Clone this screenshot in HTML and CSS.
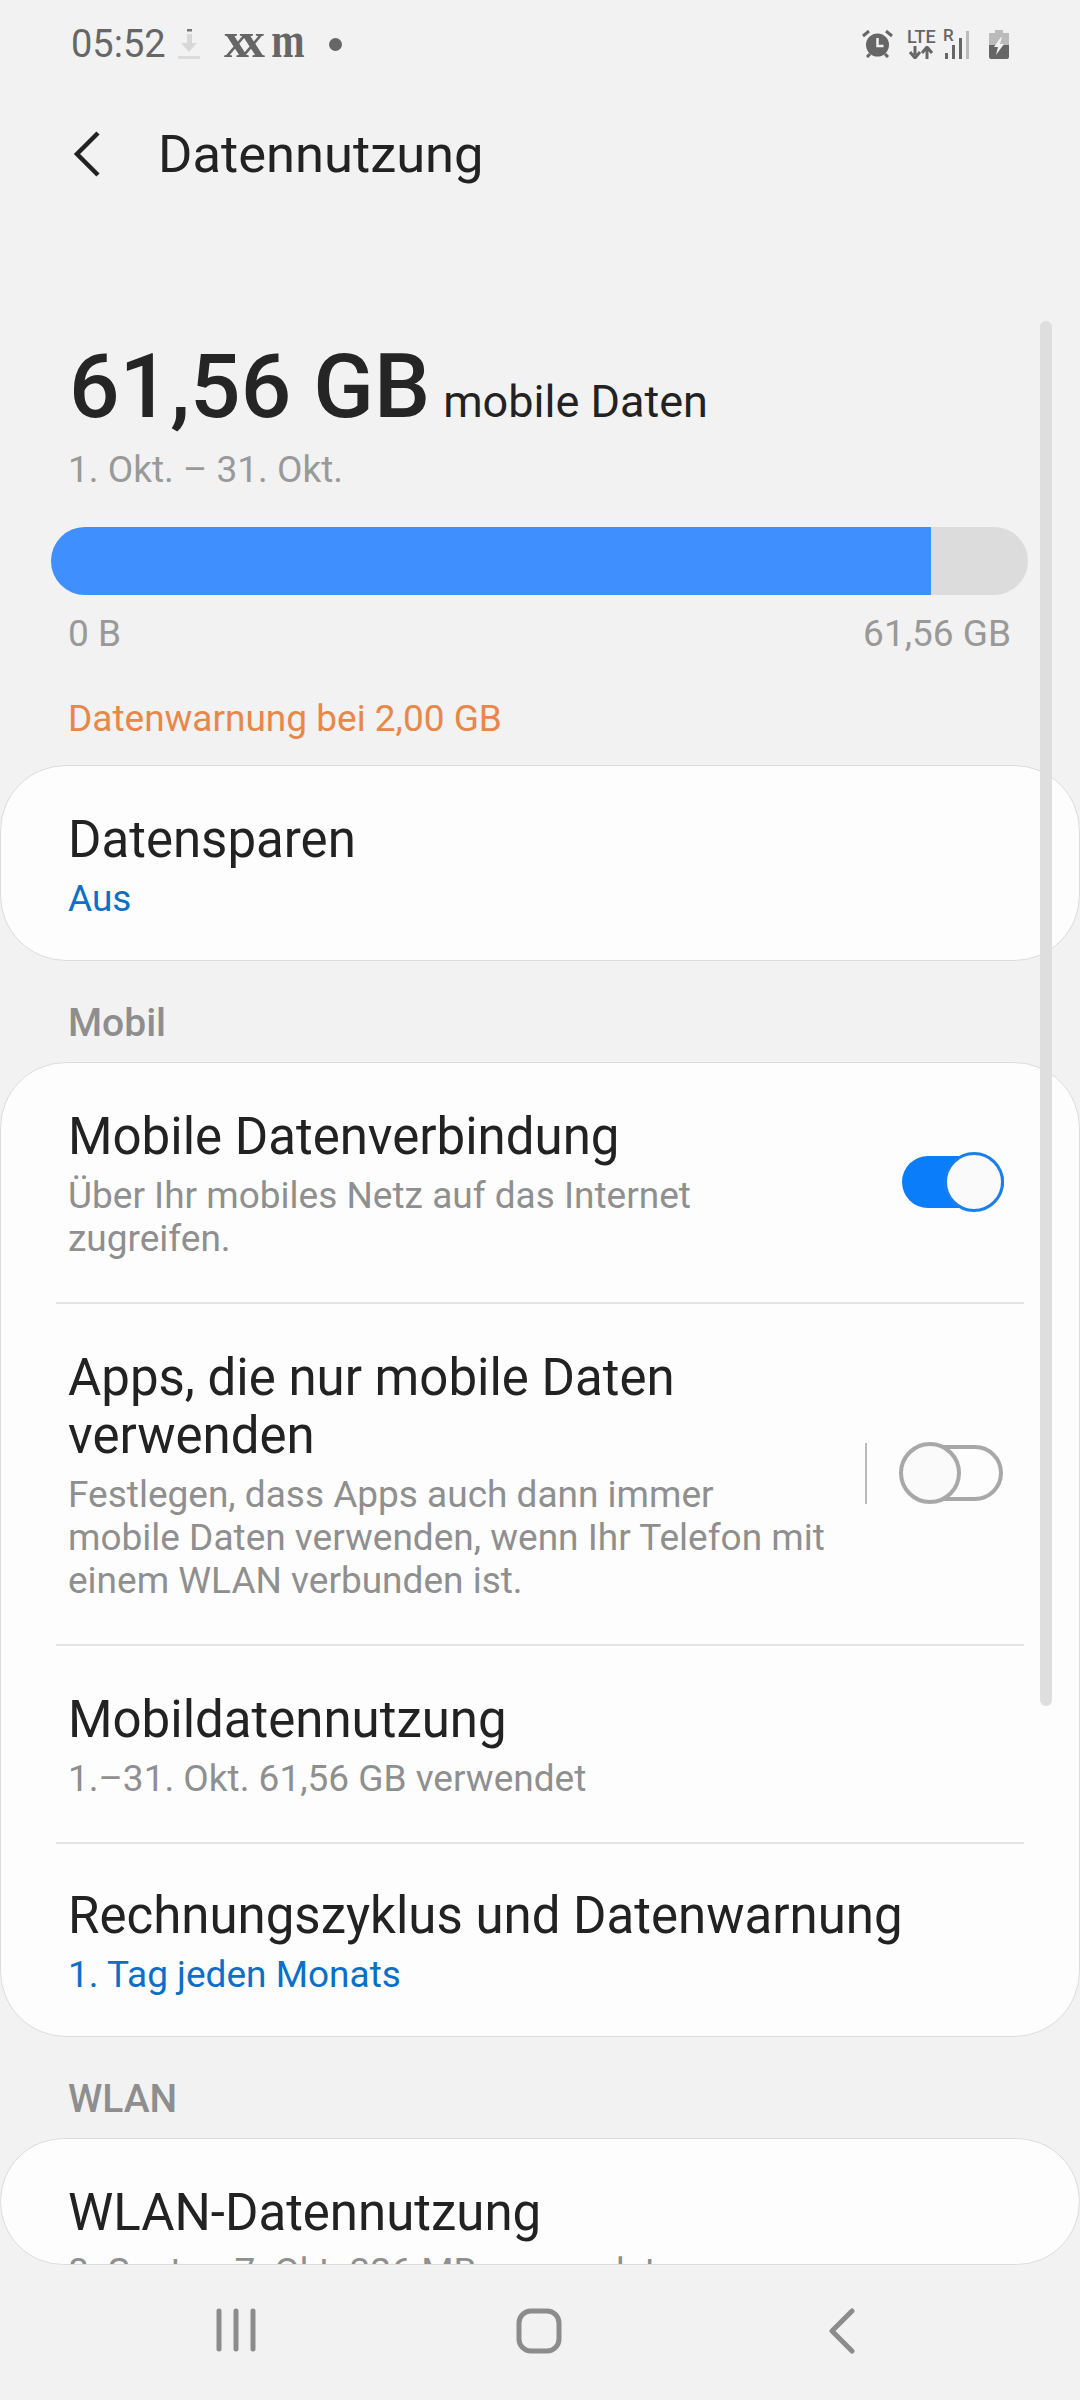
FILE: index.html
```html
<!DOCTYPE html>
<html lang="de">
<head>
  <meta charset="UTF-8" />
  <meta name="viewport" content="width=device-width, initial-scale=1.0"/>
  <title>Datennutzung</title>
  <link rel="stylesheet" href="styles.css">
</head>
<body>
  <div class="screen">
    <!-- Status bar -->
    <div class="status-bar">
      <div class="status-left">
        <span class="clock">05:52</span>
        <svg class="ic-download" width="22" height="30" viewBox="0 0 22 30">
          <rect x="9" y="0" width="5" height="2.5" fill="#777"/>
          <path d="M9 5h5v9h5l-8 9-8-9h6z" fill="#d8d8d8"/>
          <rect x="0" y="27" width="22" height="3" fill="#dcdcdc"/>
        </svg>
        <span class="notif notif-xx">xx</span>
        <span class="notif notif-m">m</span>
        <span class="status-dot"></span>
      </div>
      <div class="status-right">
        <svg class="ic-alarm" width="31" height="28" viewBox="0 0 31 28">
          <circle cx="15.500" cy="15" r="11.500" fill="#666"/>
          <path d="M15.500 8v8h6" fill="none" stroke="#f2f2f2" stroke-width="2.500"/>
          <path d="M1 6l6-5M30 6l-6-5M5 27l3-3M26 27l-3-3" stroke="#666" stroke-width="3" fill="none"/>
        </svg>
        <div class="net">
          <span class="lte">LTE</span>
          <svg width="28" height="13" viewBox="0 0 28 13">
            <path d="M8 0v9M3 6l5 6 5-6" fill="none" stroke="#666" stroke-width="3"/>
            <path d="M20 13V3M15 7l5-6 5 6" fill="none" stroke="#666" stroke-width="3"/>
          </svg>
        </div>
        <div class="signal">
          <span class="roam">R</span>
          <svg width="27" height="28" viewBox="0 0 27 28">
            <rect x="0" y="22" width="3" height="6" fill="#666"/>
            <rect x="7" y="14" width="3" height="14" fill="#666"/>
            <rect x="14" y="7" width="3" height="21" fill="#666"/>
            <rect x="21" y="0" width="3" height="28" fill="#bbb"/>
          </svg>
        </div>
        <svg class="ic-battery" width="20" height="29" viewBox="0 0 20 29">
          <path d="M6 0h8v3h6v13H0V3h6z" fill="#bbb"/>
          <path d="M0 15h20v12a2 2 0 0 1-2 2H2a2 2 0 0 1-2-2z" fill="#666"/>
          <path d="M12 7L5 17h4l-2 8 8-11h-4l2-7z" fill="#f2f2f2"/>
        </svg>
      </div>
    </div>

    <!-- Title -->
    <header class="app-bar">
      <svg class="back" width="28" height="48" viewBox="0 0 28 48">
        <path d="M25 3L4 24l21 21" fill="none" stroke="#222" stroke-width="4.500"/>
      </svg>
      <div class="app-title">Datennutzung</div>
    </header>

    <main class="content">
      <div class="scrollbar"></div>

      <section class="summary">
        <div class="usage"><span class="usage-num">61,56 GB</span> <span class="usage-label">mobile Daten</span></div>
        <div class="period">1. Okt. – 31. Okt.</div>
        <div class="bar"><div class="bar-fill" style="width: 90.1%"></div></div>
        <div class="bar-labels"><span>0 B</span><span>61,56 GB</span></div>
        <div class="warning">Datenwarnung bei 2,00 GB</div>
      </section>

      <div class="card">
        <div class="row">
          <div class="row-text">
            <div class="row-title">Datensparen</div>
            <div class="row-sub link">Aus</div>
          </div>
        </div>
      </div>

      <div class="section-label">Mobil</div>
      <div class="card">
        <div class="row">
          <div class="row-text narrow">
            <div class="row-title">Mobile Datenverbindung</div>
            <div class="row-sub">Über Ihr mobiles Netz auf das Internet zugreifen.</div>
          </div>
          <div class="toggle on"><span class="track"></span><span class="knob"></span></div>
        </div>
        <div class="row">
          <div class="row-text narrow">
            <div class="row-title">Apps, die nur mobile Daten verwenden</div>
            <div class="row-sub">Festlegen, dass Apps auch dann immer mobile Daten verwenden, wenn Ihr Telefon mit einem WLAN verbunden ist.</div>
          </div>
          <div class="v-line"></div>
          <div class="toggle"><span class="track"></span><span class="knob"></span></div>
        </div>
        <div class="row">
          <div class="row-text">
            <div class="row-title">Mobildatennutzung</div>
            <div class="row-sub">1.–31. Okt. 61,56 GB verwendet</div>
          </div>
        </div>
        <div class="row">
          <div class="row-text">
            <div class="row-title">Rechnungszyklus und Datenwarnung</div>
            <div class="row-sub link">1. Tag jeden Monats</div>
          </div>
        </div>
      </div>

      <div class="section-label">WLAN</div>
      <div class="card card-cut">
        <div class="row">
          <div class="row-text">
            <div class="row-title">WLAN-Datennutzung</div>
            <div class="row-sub">8. Sept. – 7. Okt. 326 MB verwendet</div>
          </div>
        </div>
      </div>
    </main>

    <!-- Nav buttons -->
    <nav class="nav-bar">
      <svg width="40" height="44" viewBox="0 0 40 44">
        <path d="M3 3v38M20 3v38M37 3v38" stroke="#8c8c8c" stroke-width="5" stroke-linecap="round" fill="none"/>
      </svg>
      <svg width="46" height="46" viewBox="0 0 46 46">
        <rect x="3" y="3" width="40" height="40" rx="12" fill="none" stroke="#8c8c8c" stroke-width="5"/>
      </svg>
      <svg class="nav-back" width="28" height="46" viewBox="0 0 28 46">
        <path d="M24 3L4 23l20 20" stroke="#8c8c8c" stroke-width="5" stroke-linecap="round" stroke-linejoin="round" fill="none"/>
      </svg>
    </nav>
  </div>
</body>
</html>
```

FILE: styles.css
```css
* {
  box-sizing: border-box;
}
html, body {
  margin: 0;
  height: 100%;
}
body {
  font-family: Roboto, "Noto Sans", sans-serif;
  background-color: #f2f2f2;
  color: #222;
}
.screen {
  width: 1080px;
  height: 2400px;
  display: flex;
  flex-direction: column;
  overflow: hidden;
}

/* status bar */
.status-bar {
  height: 88px;
  flex-shrink: 0;
  padding: 0 71px;
  display: flex;
  justify-content: space-between;
  align-items: center;
}
.status-left, .status-right {
  display: flex;
  align-items: center;
}
.clock {
  width: 87px;
  margin-right: 20px;
  font-size: 38px;
  color: #666;
}
.notif {
  display: inline-block;
  font-family: "Liberation Serif", serif;
  font-weight: bold;
  font-size: 50px;
  color: #666;
  line-height: 30px;
  position: relative;
  top: -4px;
}
.notif-xx {
  margin-left: 24px;
  letter-spacing: -9px;
}
.notif-m {
  margin: 0 20px 0 11px;
  transform: scaleX(.8);
}
.status-dot {
  width: 13px;
  height: 13px;
  border-radius: 50%;
  background-color: #666;
}
.ic-alarm {
  margin-right: 14px;
}
.net {
  width: 28px;
  margin-right: 8px;
  display: flex;
  flex-direction: column;
  gap: 2px;
}
.lte {
  font-size: 18px;
  line-height: 15px;
  font-weight: 500;
  color: #666;
}
.signal {
  width: 27px;
  height: 30px;
  margin-right: 19px;
  position: relative;
}
.roam {
  position: absolute;
  left: 0;
  top: -1px;
  font-size: 17px;
  line-height: 15px;
  font-weight: 500;
  color: #666;
}
.signal svg {
  position: absolute;
  left: 2px;
  top: 2px;
}

/* app bar */
.app-bar {
  height: 132px;
  flex-shrink: 0;
  padding-left: 73px;
  display: flex;
  align-items: center;
  gap: 57px;
}
.app-title {
  font-size: 52.500px;
}

/* scroll area */
.content {
  flex: 1;
  position: relative;
  overflow: hidden;
}
.scrollbar {
  position: absolute;
  top: 101px;
  right: 28px;
  width: 12px;
  height: 1385px;
  border-radius: 6px;
  background-color: #dedede;
  z-index: 5;
}
.summary {
  padding: 115px 52px 0 51px;
}
.usage {
  padding-left: 18px;
  line-height: 104px;
  height: 98px;
}
.usage-num {
  font-size: 89px;
  font-weight: 500;
  color: #252525;
}
.usage-label {
  font-size: 45px;
  margin-left: 9px;
}
.period {
  padding-left: 17px;
  margin-top: 15px;
  font-size: 37px;
  line-height: 43px;
  color: #999;
}
.bar {
  margin-top: 36px;
  height: 68px;
  border-radius: 34px;
  background-color: #dcdcdc;
  overflow: hidden;
}
.bar-fill {
  height: 100%;
  background-color: #3f8fff;
}
.bar-labels {
  margin-top: 17px;
  padding: 0 17px;
  display: flex;
  justify-content: space-between;
  font-size: 37px;
  line-height: 43px;
  color: #999;
}
.warning {
  padding-left: 17px;
  margin-top: 42px;
  font-size: 37px;
  line-height: 43px;
  color: #e8874a;
}

/* cards */
.card {
  background-color: #fdfdfd;
  border: 1px solid #dcdcdc;
  border-radius: 66px;
  overflow: hidden;
}
.summary + .card {
  margin-top: 25px;
}
.card-cut {
  height: 127px;
}
.section-label {
  padding-left: 68px;
  margin-top: 41px;
  height: 60px;
  font-size: 39px;
  line-height: 43px;
  font-weight: 500;
  color: #8e8e8e;
}
.row {
  margin: 0 55px;
  padding: 45px 20px 42px 12px;
  display: flex;
  align-items: center;
  border-top: 2px solid #e4e4e4;
}
.row:first-child {
  border-top: none;
}
.row:last-child {
  padding-bottom: 40px;
}
.row:last-child:not(:first-child) {
  padding-top: 43px;
}
.row-text {
  flex: 1;
}
.row-text.narrow {
  flex: none;
  width: 762px;
}
.row-title {
  font-size: 51px;
  line-height: 58px;
}
.row-sub {
  margin-top: 8px;
  font-size: 37px;
  line-height: 43px;
  color: #8f8f8f;
}
.row-sub.link {
  color: #0b6fc8;
}
.v-line {
  width: 2px;
  height: 61px;
  margin: 0 0 5px 35px;
  background-color: #bbb;
}

/* switches */
.toggle {
  width: 105px;
  height: 62px;
  margin: 0 0 5px auto;
  position: relative;
  flex-shrink: 0;
}
.track {
  position: absolute;
  right: 1px;
  top: 3px;
  width: 100px;
  height: 56px;
  border-radius: 28px;
  border: 4px solid #a8a8a8;
}
.knob {
  position: absolute;
  left: 0;
  top: 0;
  width: 62px;
  height: 62px;
  border-radius: 50%;
  border: 4px solid #a8a8a8;
  background-color: #fafafa;
}
.toggle.on .track {
  background-color: #0a7dfb;
  border: none;
  top: 5px;
  width: 102px;
  height: 52px;
  right: 0;
  border-radius: 26px;
}
.toggle.on .knob {
  left: auto;
  right: 0;
  width: 60px;
  height: 60px;
  top: 1px;
  border: 3px solid #1a7fe8;
}

/* nav */
.nav-bar {
  height: 135px;
  flex-shrink: 0;
  padding: 43px 0 0 216px;
  display: flex;
  align-items: flex-start;
  gap: 260px;
}
.nav-back {
  margin-left: 6px;
}
```
